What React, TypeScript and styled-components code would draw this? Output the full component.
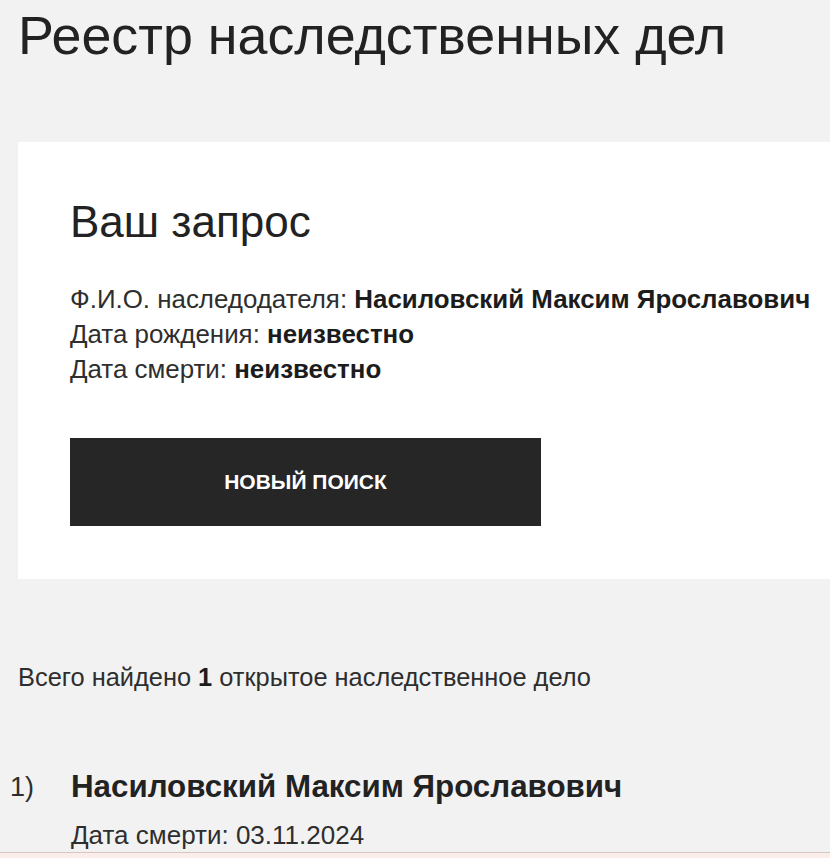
import React from "react";
import styled, { createGlobalStyle } from "styled-components";

const GlobalStyle = createGlobalStyle`
  html, body {
    margin: 0;
    padding: 0;
    background: #f2f2f2;
  }
  body {
    font-family: "Liberation Sans", Arial, Helvetica, sans-serif;
    color: #262626;
    overflow: hidden;
  }
`;

const Page = styled.main`
  min-height: 858px;
  padding: 5px 0 0 18px;
  box-sizing: border-box;
`;

const Title = styled.h1`
  margin: 0 0 77px;
  font-size: 53.8px;
  line-height: 60px;
  font-weight: 400;
  color: #222222;
  white-space: nowrap;
`;

const Card = styled.section`
  background: #ffffff;
  padding: 55px 0 53px 52px;
  display: flex;
  flex-direction: column;
  align-items: flex-start;
`;

const CardTitle = styled.h2`
  margin: 0 0 35px;
  font-size: 44px;
  line-height: 50px;
  font-weight: 400;
  color: #222222;
`;

const Details = styled.div`
  display: flex;
  flex-direction: column;
  margin-bottom: 51px;
`;

const Line = styled.p`
  margin: 0;
  font-size: 25.9px;
  line-height: 35px;
  color: #2e2e2e;
  white-space: nowrap;
`;

const Strong = styled.b`
  font-weight: 700;
  color: #1c1c1c;
`;

const Button = styled.button`
  width: 471px;
  height: 88px;
  border: none;
  background: #262626;
  color: #ffffff;
  font-family: "Liberation Sans", Arial, sans-serif;
  font-size: 21px;
  font-weight: 700;
  text-transform: uppercase;
  cursor: pointer;
  padding: 0;
`;

const Summary = styled.p`
  margin: 81px 0 74px;
  font-size: 25.4px;
  line-height: 35px;
  color: #2e2e2e;
`;

const List = styled.ol`
  list-style: none;
  margin: 0 0 0 -8px;
  padding: 0;
`;

const Item = styled.li`
  display: grid;
  grid-template-columns: 61px 1fr;
  row-gap: 13px;
`;

const Marker = styled.span`
  font-size: 27px;
  line-height: 36px;
  color: #2e2e2e;
`;

const Name = styled.span`
  font-size: 31.3px;
  line-height: 36px;
  font-weight: 700;
  color: #222222;
  white-space: nowrap;
`;

const Meta = styled.span`
  grid-column: 2;
  font-size: 26px;
  line-height: 35px;
  color: #2e2e2e;
`;

const BottomStrip = styled.div`
  position: fixed;
  left: 0;
  right: 0;
  bottom: 0;
  height: 5px;
  border-top: 1px solid #d9c6c1;
  background: #fbeeea;
`;

export default function App() {
  return (
    <>
      <GlobalStyle />
      <Page>
        <Title>Реестр наследственных дел</Title>
        <Card>
          <CardTitle>Ваш запрос</CardTitle>
          <Details>
            <Line>
              Ф.И.О. наследодателя: <Strong>Насиловский Максим Ярославович</Strong>
            </Line>
            <Line>
              Дата рождения: <Strong>неизвестно</Strong>
            </Line>
            <Line>
              Дата смерти: <Strong>неизвестно</Strong>
            </Line>
          </Details>
          <Button type="button">Новый поиск</Button>
        </Card>
        <Summary>
          Всего найдено <Strong>1</Strong> открытое наследственное дело
        </Summary>
        <List>
          <Item>
            <Marker>1)</Marker>
            <Name>Насиловский Максим Ярославович</Name>
            <Meta>Дата смерти: 03.11.2024</Meta>
          </Item>
        </List>
      </Page>
      <BottomStrip />
    </>
  );
}
